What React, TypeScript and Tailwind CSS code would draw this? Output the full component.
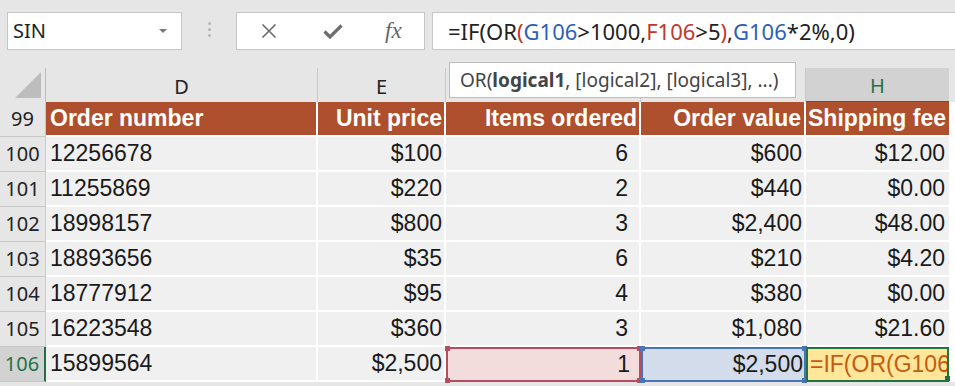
const cols = "grid grid-cols-[46px_272px_128px_195px_165px_143px_6px]";
const ui = "font-['Noto_Sans',sans-serif]";
const cell = "font-['Liberation_Sans',sans-serif] text-[23px] leading-none";

const rows = [
  { n: 100, id: "12256678", price: "$100", items: "6", value: "$600", fee: "$12.00" },
  { n: 101, id: "11255869", price: "$220", items: "2", value: "$440", fee: "$0.00" },
  { n: 102, id: "18998157", price: "$800", items: "3", value: "$2,400", fee: "$48.00" },
  { n: 103, id: "18893656", price: "$35", items: "6", value: "$210", fee: "$4.20" },
  { n: 104, id: "18777912", price: "$95", items: "4", value: "$380", fee: "$0.00" },
  { n: 105, id: "16223548", price: "$360", items: "3", value: "$1,080", fee: "$21.60" },
];

function Corners({ color }: { color: string }) {
  return (
    <>
      <span className={`absolute -left-[3px] -top-[3px] h-[5px] w-[5px] ${color}`} />
      <span className={`absolute -right-[3px] -top-[3px] h-[5px] w-[5px] ${color}`} />
      <span className={`absolute -left-[3px] -bottom-[3px] h-[5px] w-[5px] ${color}`} />
      <span className={`absolute -right-[3px] -bottom-[3px] h-[5px] w-[5px] ${color}`} />
    </>
  );
}

export default function App() {
  return (
    <div className="relative h-[386px] w-[955px] overflow-hidden bg-[#e6e6e6] text-[#1a1a1a]">

      {/* Formula bar */}
      <div className="flex h-[66px] items-start pt-[12px]">
        <div className={`ml-[7px] flex h-[38px] w-[175px] items-center justify-between border border-[#c6c6c6] bg-white pl-[5px] pr-[14px] text-[20px] text-[#222] ${ui}`}>
          <span>SIN</span>
          <span className="h-0 w-0 border-x-[4px] border-t-[4px] border-x-transparent border-t-[#777]" />
        </div>
        <div className="flex w-[54px] flex-col items-center gap-[3px] pt-[10px]">
          <span className="h-[3px] w-[3px] rounded-full bg-[#b5b5b5]" />
          <span className="h-[3px] w-[3px] rounded-full bg-[#b5b5b5]" />
          <span className="h-[3px] w-[3px] rounded-full bg-[#b5b5b5]" />
        </div>
        <div className="flex h-[38px] w-[189px] items-center border border-[#c6c6c6] bg-white">
          <svg className="ml-[24px]" width="16" height="16" viewBox="0 0 16 16">
            <path d="M1.5 1.5 L14.5 14.5 M14.5 1.5 L1.5 14.5" stroke="#6a6a6a" strokeWidth="1.6" fill="none" />
          </svg>
          <svg className="ml-[46px]" width="20" height="16" viewBox="0 0 20 16">
            <path d="M1.5 8.5 L7 14 L18.5 2.5" stroke="#6e6e6e" strokeWidth="3.2" fill="none" />
          </svg>
          <span className="ml-[42px] font-['Liberation_Serif',serif] text-[23px] italic text-[#666]">fx</span>
        </div>
        <div className={`ml-[7px] flex h-[38px] flex-1 items-center border-y border-l border-[#c6c6c6] bg-white pl-[15px] text-[22px] text-[#222] ${ui}`}>
          <span>=IF(OR</span>
          <span className="text-[#c0392b]">(</span>
          <span className="text-[#2e5fb8]">G106</span>
          <span>&gt;1000,</span>
          <span className="text-[#c0392b]">F106</span>
          <span>&gt;5</span>
          <span className="text-[#c0392b]">)</span>
          <span>,</span>
          <span className="text-[#2e5fb8]">G106</span>
          <span>*2%,0)</span>
        </div>
      </div>

      {/* Column headers */}
      <div className={`${cols} h-[36px] pt-[2px] ${ui} text-[20px] text-[#222]`}>
        <div className="flex items-center justify-end border-r border-[#bdbdbd] pb-[2px] pr-[4px]">
          <svg width="26" height="26" viewBox="0 0 26 26">
            <path d="M26 0 L26 26 L0 26 Z" fill="#bdbdbd" />
          </svg>
        </div>
        <div className="flex items-center justify-center border-r border-[#c8c8c8] pt-[3px]">D</div>
        <div className="flex items-center justify-center border-r border-[#c8c8c8] pt-[3px]">E</div>
        <div className="flex items-center justify-center border-r border-[#c8c8c8] pt-[3px]">F</div>
        <div className="flex items-center justify-center border-r border-[#c8c8c8] pt-[3px]">G</div>
        <div className="flex items-center justify-center border-b-2 border-[#217346] bg-[#d2d2d2] pt-[3px] text-[#217346]">H</div>
        <div />
      </div>

      {/* Header row */}
      <div className={`${cols} h-[35px]`}>
        <div className={`flex items-center justify-center border-b border-r border-[#c8c8c8] text-[20px] text-[#222] ${ui}`}>99</div>
        <div className={`flex items-center border-b-2 border-r-2 border-white bg-[#ae4f2d] pl-[4px] font-bold text-white ${cell}`}>Order number</div>
        <div className={`flex items-center justify-end border-b-2 border-r-2 border-white bg-[#ae4f2d] pr-[2px] font-bold text-white ${cell}`}>Unit price</div>
        <div className={`flex items-center justify-end border-b-2 border-r-2 border-white bg-[#ae4f2d] pr-[2px] font-bold text-white ${cell}`}>Items ordered</div>
        <div className={`flex items-center justify-end border-b-2 border-r-2 border-white bg-[#ae4f2d] pr-[3px] font-bold text-white ${cell}`}>Order value</div>
        <div className={`flex items-center justify-end border-b-2 border-white bg-[#ae4f2d] pr-[3px] font-bold text-white ${cell}`}>Shipping fee</div>
        <div className="bg-white" />
      </div>

      {/* Data rows */}
      {rows.map((r) => (
        <div key={r.n} className={`${cols} h-[35px]`}>
          <div className={`flex items-center justify-center border-b border-r border-[#c8c8c8] text-[20px] text-[#222] ${ui}`}>{r.n}</div>
          <div className={`flex items-center border-b-2 border-r-2 border-white bg-[#f0f0f0] pl-[4px] ${cell}`}>{r.id}</div>
          <div className={`flex items-center justify-end border-b-2 border-r-2 border-white bg-[#f0f0f0] pr-[2px] ${cell}`}>{r.price}</div>
          <div className={`flex items-center justify-end border-b-2 border-r-2 border-white bg-[#f0f0f0] pr-[11px] ${cell}`}>{r.items}</div>
          <div className={`flex items-center justify-end border-b-2 border-r-2 border-white bg-[#f0f0f0] pr-[2px] ${cell}`}>{r.value}</div>
          <div className={`flex items-center justify-end border-b-2 border-white bg-[#f0f0f0] pr-[4px] ${cell}`}>{r.fee}</div>
          <div className="bg-white" />
        </div>
      ))}

      {/* Active row 106 */}
      <div className={`${cols} h-[35px]`}>
        <div className={`flex items-center justify-center border-b border-r-2 border-[#c8c8c8] border-r-[#217346] bg-[#d2d2d2] text-[20px] text-[#217346] ${ui}`}>106</div>
        <div className={`flex items-center border-b-2 border-r-2 border-white bg-[#f0f0f0] pl-[4px] ${cell}`}>15899564</div>
        <div className={`flex items-center justify-end border-b-2 border-r-2 border-white bg-[#f0f0f0] pr-[2px] ${cell}`}>$2,500</div>
        <div className={`relative flex items-center justify-end border-2 border-[#b64d5c] bg-[#f2dcdc] pr-[9px] ${cell}`}>
          1
          <Corners color="bg-[#b64d5c]" />
        </div>
        <div className={`relative flex items-center justify-end border-2 border-[#4a74b8] bg-[#d3dcea] pr-[1px] ${cell}`}>
          $2,500
          <Corners color="bg-[#4a74b8]" />
        </div>
        <div className={`relative flex items-center overflow-hidden whitespace-nowrap border-2 border-[#217346] bg-[#ffe699] pl-[2px] text-[#c55a11] ${cell}`}>
          =IF(OR(G106&gt;
        </div>
        <div className="relative bg-white">
          <span className="absolute -left-[4px] bottom-[1px] h-[5px] w-[5px] bg-[#217346]" />
        </div>
      </div>

      {/* Function tooltip */}
      <div className={`absolute left-[449px] top-[62px] flex h-[36px] w-[347px] items-center border border-[#bdbdbd] bg-white pl-[10px] text-[19px] text-[#444] ${ui}`}>
        OR(<span className="font-bold">logical1</span>, [logical2], [logical3], ...)
      </div>
    </div>
  );
}
